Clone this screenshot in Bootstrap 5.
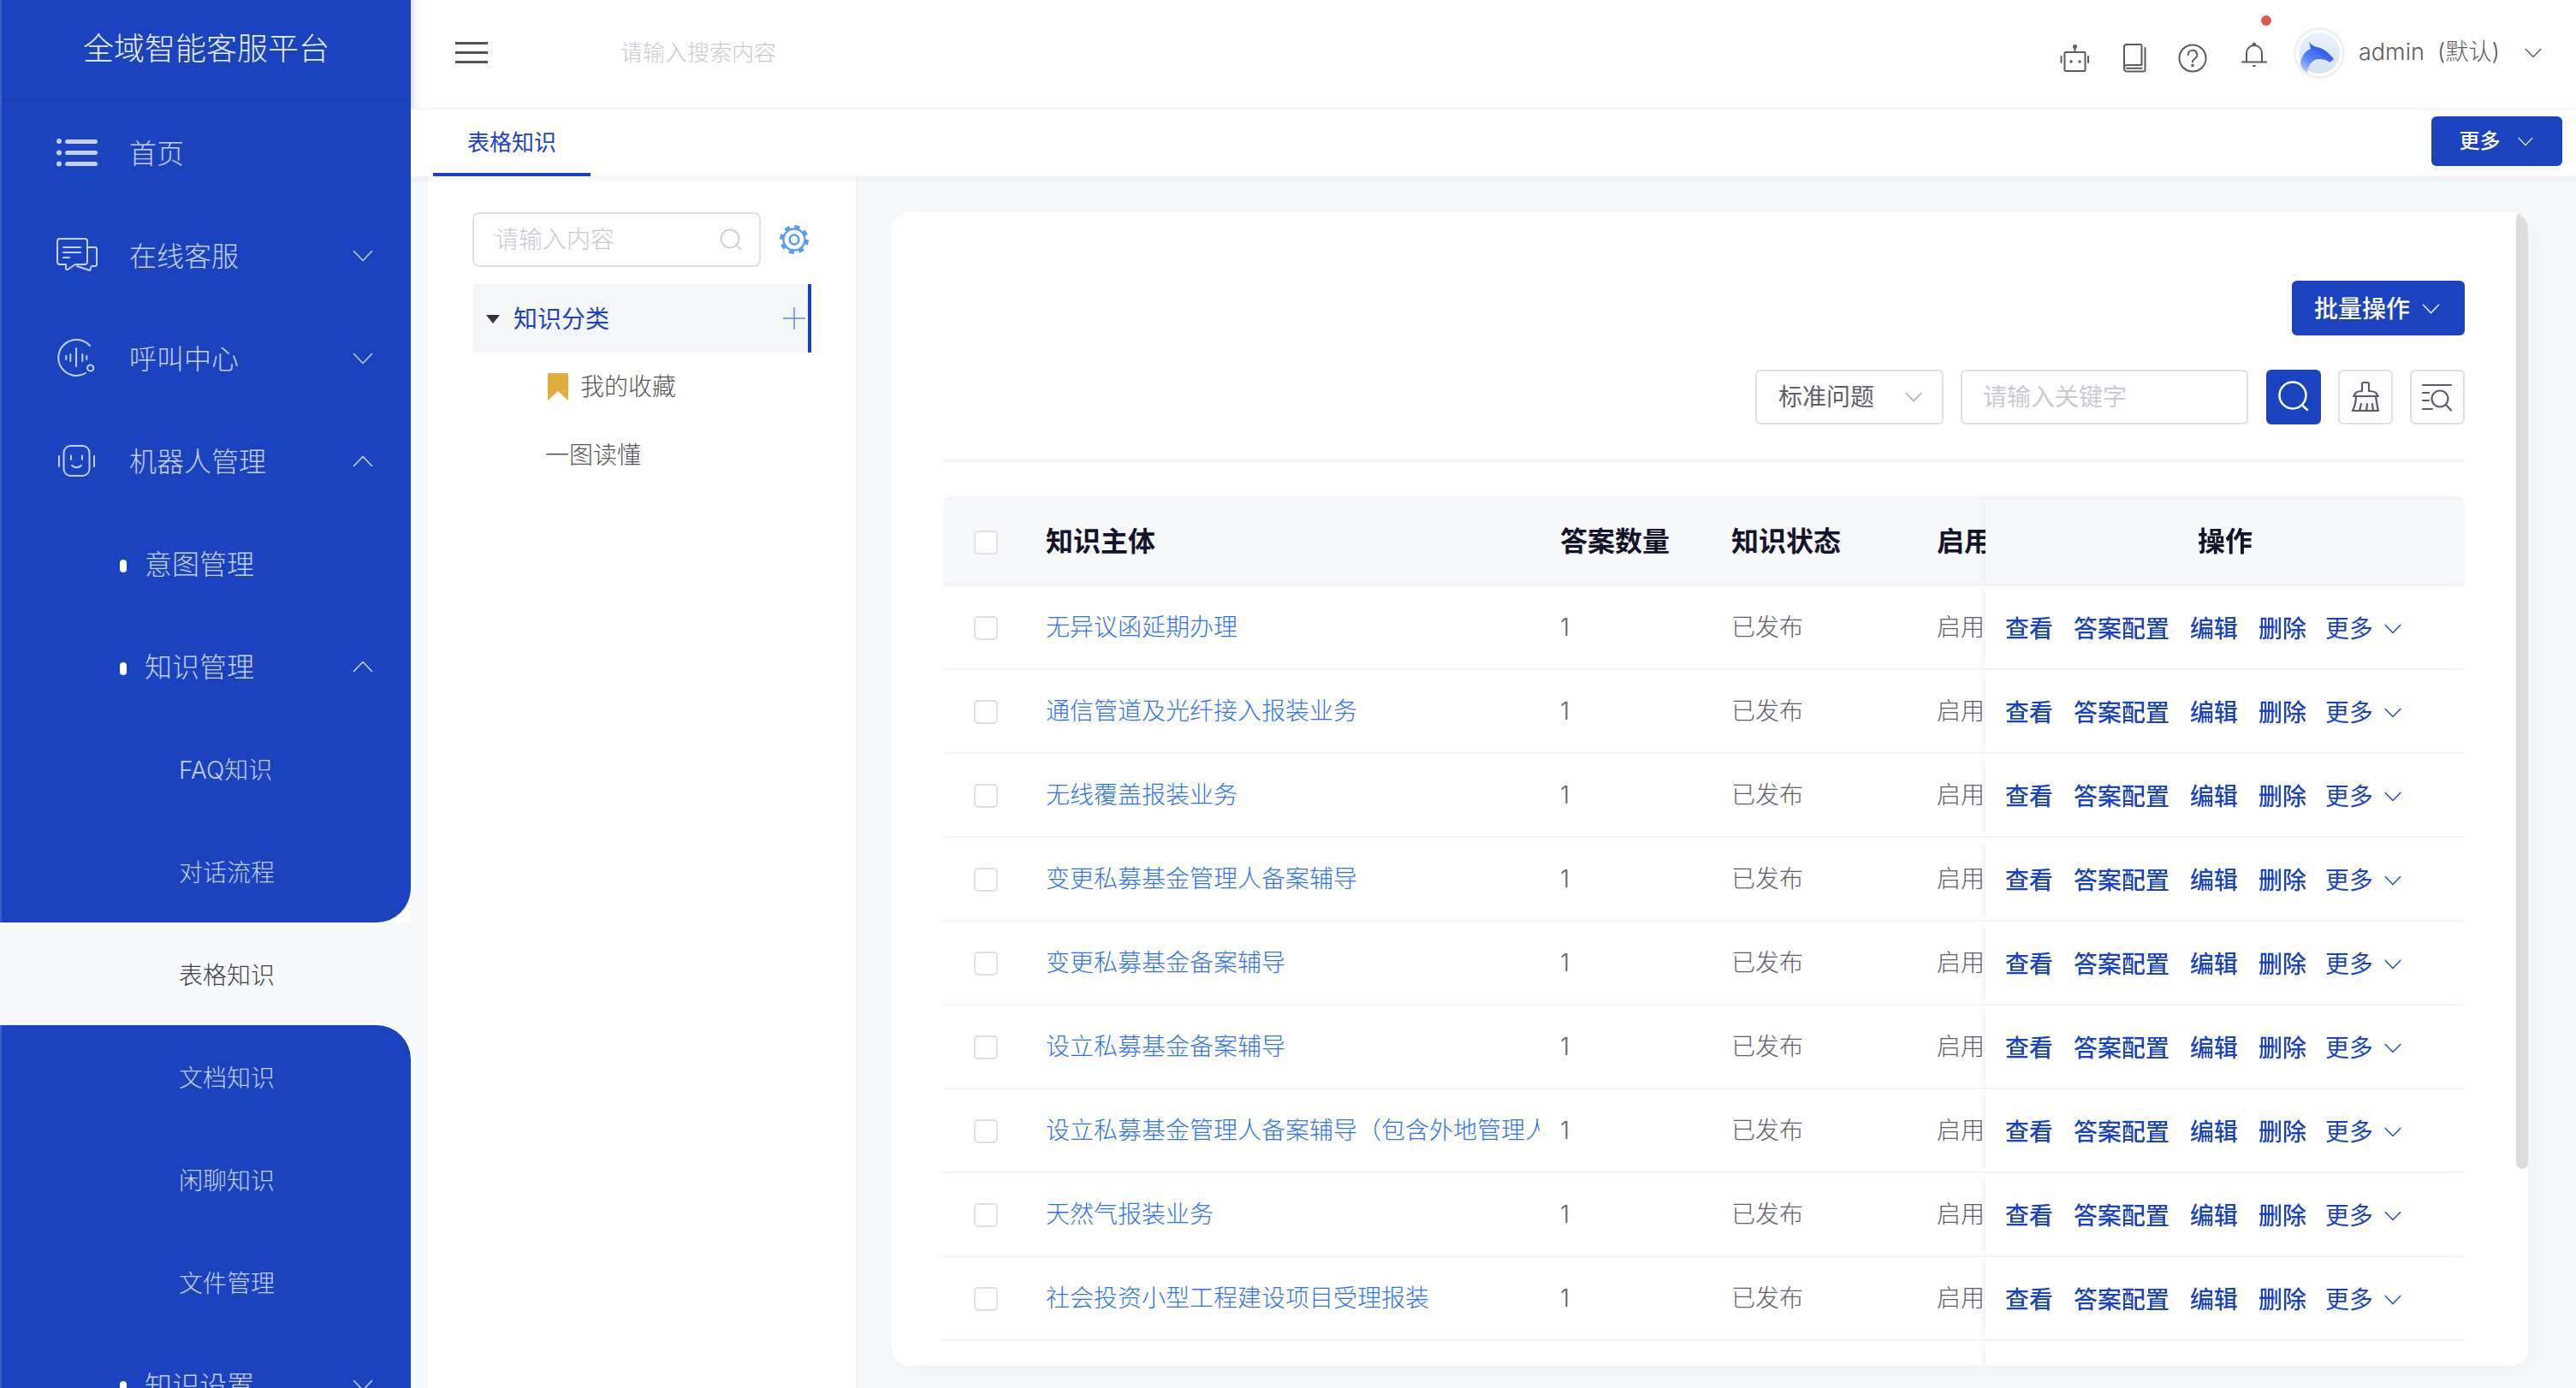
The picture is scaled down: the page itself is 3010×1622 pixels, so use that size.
<!DOCTYPE html>
<html lang="zh-CN">
<head>
<meta charset="utf-8">
<title>全域智能客服平台</title>
<link rel="stylesheet" href="https://cdn.jsdelivr.net/npm/bootstrap@5.3.0/dist/css/bootstrap.min.css">
<style>
:root{--brand:#1c43bf;--txt:#5f606a;--line:#f3f3f8;--pane:#f7f8fa}
html,body{height:100%}
body{font-family:"Inter","Noto Sans CJK SC",sans-serif;font-weight:300;background:var(--pane);overflow:hidden;color:var(--txt);font-size:28px}
svg{display:block;flex:none}
.ico{fill:none;stroke:currentColor;stroke-linecap:round;stroke-linejoin:round}
.side{width:480px;height:1622px;overflow:hidden;background:#f8f9fb;flex:none}
.side-logo{height:118px;flex:none;background:var(--brand);box-shadow:inset 2px 0 0 #3f60c9,inset 0 -2px 0 #1a3eb0;color:#e9eefb;font-size:36px;padding-left:97px;padding-bottom:5px}
.grp-wrap{background:#fff;flex:none}
.grp-a{background:var(--brand);border-bottom-right-radius:40px;box-shadow:inset 2px 0 0 #3f60c9}
.grp-b{background:var(--brand);border-top-right-radius:40px;box-shadow:inset 2px 0 0 #3f60c9;flex-wrap:nowrap;flex:none}
.menu-row{height:120px;flex:none;padding:4px 44px 0 0;color:#c5cff1;font-size:32px}
.menu-row:hover,.menu-row:focus{color:#c5cff1}
.menu-row>svg,.menu-row>.mi,.menu-row>i{position:relative;top:-1px}
.lv1{padding-left:66px}
.lv1 .mi{width:48px;margin-right:37px;display:flex;justify-content:center}
.lv2{padding-left:140px}
.lv2 i{width:8px;height:15px;border-radius:4px;background:#fff;margin-right:21px;margin-top:4px}
.lv3{padding-left:209px;font-size:28px;background:transparent}
.lv3.on,.lv3.on:hover{color:#3e3f49;background:#f8f9fb;flex:none}
.chev{margin-left:auto;color:#c5cff1}
.main{width:2530px;height:1622px}
.topbar{height:128px;flex:none;background:#fff;border-bottom:2px solid #f4f4f7;padding-left:52px;box-shadow:inset 12px 0 10px -10px rgba(40,50,90,.22);color:#5c5c5c}
.burger{width:38px;height:25px;display:flex;flex-direction:column;justify-content:space-between;margin-top:-4px}
.burger i{height:3px;background:#555}
.top-search{margin-left:155px;font-size:26px;color:#c9cad1;margin-top:-4px}
.ti-robot{margin-left:auto;margin-top:12px}
.ti-book{margin-left:39px;margin-top:10px}
.ti-q{margin-left:37px;margin-top:10px}
.ti-bell{margin-left:40px;margin-top:2px;position:relative}
.ti-bell b{position:absolute;left:23px;top:-31px;width:12px;height:12px;border-radius:50%;background:#e05a50}
.ti-ava{margin-left:31px;margin-top:-2px}
.ti-name{margin-left:16px;font-size:27px;color:#5c5c5c;white-space:pre;margin-top:-4px;width:194px}
.ti-chev{margin-right:40px;margin-top:-2px}
.tabbar{height:78px;flex:none;background:#fff;box-shadow:0 3px 6px rgba(40,50,90,.06);position:relative;padding:0 16px 0 26px}
.tab-on{width:184px;height:78px;border-bottom:4px solid var(--brand);color:var(--brand);font-size:26px;font-weight:400;padding-top:3px}
.btn-brand{background:var(--brand);border:0;color:#fff;border-radius:6px;font-weight:500;padding:0}
.btn-brand:hover{background:var(--brand);color:#fff}
.btn-more{width:153px;height:58px;font-size:24px;margin-top:8px;margin-left:auto;gap:20px;padding-right:2px}
.btn-batch{width:202px;height:64px;font-size:28px;gap:14px;padding:2px 0 0 26px;justify-content:flex-start}
.work{height:1416px;padding-left:20px}
.tree{width:502px;background:#fff;border-right:2px solid #f2f2f6;padding:42px 52px 0 52px;flex:none}
.tree-s{width:337px;height:64px;border:2px solid #e0e1e7;border-radius:8px;padding:0 20px 0 24px;color:#c9cad1;font-size:28px}
.tree-sel{width:395px;height:80px;margin:20px 0 0 1px;background:#f5f6f9;border-right:4px solid var(--brand);color:var(--brand);font-size:28px;font-weight:400;padding:2px 2px 0 15px}
.tree-sel u{width:0;height:0;border:8px solid transparent;border-top:10px solid #333;border-bottom:0;margin-right:16px}
.tree-row{height:80px;font-size:28px;color:#555;margin-left:85px}
.tree-row.fav{margin-left:88px}
.pane{padding:42px 0 0 40px}
.sheet{width:1912px;height:1348px;background:#fff;border-radius:20px;box-shadow:8px 8px 20px rgba(60,70,110,.03);padding:80px 74px 0 60px;position:relative;overflow:hidden}
.scrollthumb{position:absolute;right:0;top:0;width:14px;height:1118px;background:#dcdde1;border-radius:7px}
.fbar{margin-top:40px;height:64px}
.fbox{height:64px;border:2px solid #e0e1e7;border-radius:6px;font-size:28px;padding:0}
.fsel{width:220px;padding:0 22px 0 25px;color:#5f606a;margin-right:20px}
.fkey{width:336px;padding:0 24px;color:#c9cad1;margin-right:21px}
.fsq{width:64px;height:64px;padding:0;margin-right:20px;border:2px solid #e0e1e7;border-radius:6px;background:#fff;color:#5a5c66;flex:none}
.fsq.go{background:var(--brand);border-color:var(--brand);color:#fff}
.fsq:last-child{margin-right:0}
.rule{height:4px;background:#f5f5f9;margin:40px 0}
.kb{table-layout:fixed;width:1778px;margin:0;border-collapse:separate;border-spacing:0}
.table.kb>:not(caption)>*>*{padding:0;height:98px;border:0;border-bottom:2px solid var(--line);background:#fff;box-shadow:none;color:var(--txt);font-weight:300;vertical-align:middle;font-size:28px}
.table.kb>thead>tr>th{height:105px;background:var(--pane);border-top:4px solid var(--line);border-bottom:4px solid var(--line);color:#14152c;font-weight:700;font-size:32px;overflow:hidden;white-space:nowrap}
.kb thead th:first-child{border-top-left-radius:8px}
.kb thead th:last-child{border-top-right-radius:8px}
.cb{width:28px;height:28px;border:2px solid #dfe0e6;border-radius:5px;background:#fff;margin:2px 0 0 36px}
.name-clip{width:577px;overflow:hidden;white-space:nowrap}
.name-clip a{color:#2f72f0;text-decoration:none}
.table.kb>*>tr>.opc{position:sticky;right:0;box-shadow:-8px 0 8px -6px rgba(40,50,90,.08)}
.table.kb>thead>tr>th.opc{text-align:center;padding-right:0}
.acts{padding:3px 0 0 23px;color:var(--brand);font-weight:500}
.acts a{color:var(--brand);text-decoration:none;margin-right:24px;white-space:nowrap}
.acts a.m{font-weight:400;margin-right:13px;margin-left:-2px}
</style>
</head>
<body>
<svg width="0" height="0" style="position:absolute">
  <symbol id="cd" viewBox="0 0 24 14"><path d="M1.5 1.5 12 12.5 22.5 1.5" fill="none" stroke="currentColor" stroke-width="1.6" stroke-linecap="round" stroke-linejoin="round"/></symbol>
  <symbol id="cu" viewBox="0 0 24 14"><path d="M1.5 12.5 12 1.5 22.5 12.5" fill="none" stroke="currentColor" stroke-width="1.6" stroke-linecap="round" stroke-linejoin="round"/></symbol>
</svg>

<div class="d-flex">
  <aside class="side d-flex flex-column">
    <div class="side-logo d-flex align-items-center">全域智能客服平台</div>
    <div class="grp-wrap">
      <nav class="nav flex-column grp-a">
        <a class="nav-link menu-row lv1 d-flex align-items-center" href="#"><span class="mi"><svg width="48" height="34" viewBox="0 0 48 34"><g fill="currentColor"><circle cx="3" cy="3" r="3"/><circle cx="3" cy="16.5" r="3"/><circle cx="3" cy="29.5" r="3"/><rect x="10" y="1" width="38" height="5" rx="2.5"/><rect x="10" y="14" width="38" height="5" rx="2.5"/><rect x="10" y="27" width="38" height="5" rx="2.5"/></g></svg></span>首页</a>
        <a class="nav-link menu-row lv1 d-flex align-items-center" href="#"><span class="mi"><svg class="ico" width="48" height="42" viewBox="0 0 48 42" stroke-width="2"><path d="M4 1H33a3 3 0 0 1 3 3V28a3 3 0 0 1-3 3H22L13 37a1.5 1.5 0 0 1-2-1L11 31H4a3 3 0 0 1-3-3V4a3 3 0 0 1 3-3Z"/><path d="M36 11H45a2 2 0 0 1 2 2V31a2 2 0 0 1-2 2H41L39 38 24 33"/><path d="M8 11H28M8 17H28M8 23H15"/></svg></span>在线客服<svg class="chev" width="24" height="14"><use href="#cd"/></svg></a>
        <a class="nav-link menu-row lv1 d-flex align-items-center" href="#"><span class="mi"><svg class="ico" width="46" height="46" viewBox="0 0 46 46" stroke-width="2"><path d="M38 8A21 21 0 1 0 33 40"/><circle cx="38.7" cy="34" r="3.6"/><path d="M22 11V32M15.300 18V26M29.300 18V26M10.300 20V24M34.300 20V24"/></svg></span>呼叫中心<svg class="chev" width="24" height="14"><use href="#cd"/></svg></a>
        <a class="nav-link menu-row lv1 d-flex align-items-center" href="#"><span class="mi"><svg class="ico" width="46" height="38" viewBox="0 0 46 38" stroke-width="2"><rect x="7.500" y="1" width="30" height="35" rx="8"/><path d="M2 13V25M43 13V25M16 12.500V17M29 12.500V17M17 24Q22.500 28.500 28 24"/></svg></span>机器人管理<svg class="chev" width="24" height="14"><use href="#cu"/></svg></a>
        <a class="nav-link menu-row lv2 d-flex align-items-center" href="#"><i></i>意图管理</a>
        <a class="nav-link menu-row lv2 d-flex align-items-center" href="#"><i></i>知识管理<svg class="chev" width="24" height="14"><use href="#cu"/></svg></a>
        <a class="nav-link menu-row lv3 d-flex align-items-center" href="#">FAQ知识</a>
        <a class="nav-link menu-row lv3 d-flex align-items-center" href="#">对话流程</a>
      </nav>
    </div>
    <a class="nav-link menu-row lv3 on d-flex align-items-center" href="#">表格知识</a>
    <nav class="nav flex-column grp-b">
      <a class="nav-link menu-row lv3 d-flex align-items-center" href="#">文档知识</a>
      <a class="nav-link menu-row lv3 d-flex align-items-center" href="#">闲聊知识</a>
      <a class="nav-link menu-row lv3 d-flex align-items-center" href="#">文件管理</a>
      <a class="nav-link menu-row lv2 d-flex align-items-center" href="#"><i></i>知识设置<svg class="chev" width="24" height="14"><use href="#cd"/></svg></a>
    </nav>
  </aside>

  <main class="main d-flex flex-column">
    <header class="topbar d-flex align-items-center">
      <span class="burger"><i></i><i></i><i></i></span>
      <span class="top-search">请输入搜索内容</span>
      <svg class="ico ti-robot" width="34" height="34" viewBox="0 0 34 34" stroke-width="2"><rect x="5.500" y="9" width="24" height="22" rx="1"/><path d="M17.500 3V9M1.500 14V21M33 14V21"/><circle cx="17.500" cy="2.500" r="1.500" fill="currentColor"/><circle cx="13" cy="20" r="1.700" fill="currentColor" stroke="none"/><circle cx="23" cy="20" r="1.700" fill="currentColor" stroke="none"/></svg>
      <svg class="ico ti-book" width="28" height="34" viewBox="0 0 28 34" stroke-width="2"><path d="M2 28V4A3 3 0 0 1 5 1H21A1.500 1.500 0 0 1 22.500 2.500V25H5A3.500 3.500 0 0 0 2 28.500 3.500 3.500 0 0 0 5 32.500H25A1.500 1.500 0 0 0 26.500 31V5"/><path d="M5 28.700H22.500"/></svg>
      <svg class="ico ti-q" width="34" height="34" viewBox="0 0 34 34" stroke-width="2"><circle cx="17" cy="17" r="15.500"/><path d="M11.800 13a5.200 5.200 0 1 1 7.800 4.500C17.800 18.500 17 19.500 17 21.500"/><circle cx="17" cy="25.500" r=".8" fill="currentColor"/></svg>
      <span class="ti-bell"><svg class="ico" width="30" height="30" viewBox="0 0 30 30" stroke-width="2"><path d="M6 23V13A9 9 0 0 1 24 13V23"/><path d="M1 23.500H29"/><circle cx="15" cy="3" r="1.200" fill="currentColor"/><path d="M14 28H16"/></svg><b></b></span>
      <svg class="ti-ava" width="60" height="60" viewBox="0 0 60 60"><defs><linearGradient id="ag" x1="0" y1="0" x2="0" y2="1"><stop offset="0" stop-color="#e8f2fd"/><stop offset="1" stop-color="#d5e3f4"/></linearGradient><linearGradient id="ah" x1=".7" y1=".2" x2=".1" y2="1"><stop offset="0" stop-color="#2b58f4"/><stop offset=".6" stop-color="#5f8af6"/><stop offset="1" stop-color="#b6cff8"/></linearGradient></defs><circle cx="30" cy="30" r="28.500" fill="#fff" stroke="#f0f0f3" stroke-width="3"/><circle cx="30" cy="30" r="24" fill="url(#ag)"/><path d="M8 41C10 33 14 27 20 25L18 17C22 22 27 23 31 24 37 26 42 31 47 37L42 41C39 38 35 37 31 37 24 36 17 42 16 53 11 50 8 46 8 41Z" fill="url(#ah)"/></svg>
      <span class="ti-name">admin  (默认)</span>
      <svg class="ti-chev" width="20" height="12"><use href="#cd"/></svg>
    </header>
    <div class="tabbar d-flex">
      <div class="tab-on d-flex align-items-center justify-content-center">表格知识</div>
      <button class="btn btn-brand btn-more d-flex align-items-center justify-content-center" type="button">更多<svg width="18" height="11"><use href="#cd"/></svg></button>
    </div>
    <div class="work d-flex">
      <section class="tree">
        <div class="tree-s d-flex align-items-center justify-content-between position-relative">请输入内容
          <svg class="ico" width="26" height="26" viewBox="0 0 26 26" stroke-width="1.600" color="#c9cad1"><circle cx="12" cy="12" r="10.500"/><path d="M20 20 24.500 24.500"/></svg>
          <svg class="ico position-absolute" style="left:356px;top:12px" width="36" height="36" viewBox="0 0 36 36" stroke-width="2.400" color="#5b9bf6"><circle cx="18" cy="18" r="12.500"/><circle cx="18" cy="18" r="5.500"/><circle cx="18" cy="18" r="15" stroke-width="4" stroke-dasharray="6 5.780" stroke-linecap="butt"/></svg>
        </div>
        <div class="tree-sel d-flex align-items-center"><u></u>知识分类<svg class="ms-auto" width="26" height="26" viewBox="0 0 26 26" style="margin:-2px 1px 0 0"><path d="M13 0V26M0 13H26" stroke="#5b8ee8" stroke-width="1.500"/></svg></div>
        <div class="tree-row fav d-flex align-items-center"><svg width="24" height="32" viewBox="0 0 24 32" style="margin-right:14px"><path d="M0 0H24V32L12 21 0 32Z" fill="#dfae3c"/></svg>我的收藏</div>
        <div class="tree-row d-flex align-items-center">一图读懂</div>
      </section>
      <section class="pane">
        <div class="sheet">
          <span class="scrollthumb"></span>
          <div class="d-flex justify-content-end"><button class="btn btn-brand btn-batch d-flex align-items-center" type="button">批量操作<svg width="21" height="12"><use href="#cd"/></svg></button></div>
          <div class="fbar d-flex justify-content-end">
            <div class="form-control fbox fsel d-flex align-items-center justify-content-between">标准问题<svg width="22" height="12" color="#a9aab2"><use href="#cd"/></svg></div>
            <div class="form-control fbox fkey d-flex align-items-center">请输入关键字</div>
            <button class="btn fsq go d-flex" type="button"><svg class="ico" width="60" height="60" viewBox="0 0 60 60" stroke-width="2.500"><circle cx="29" cy="28" r="15.500"/><path d="M40 39.500 46 45"/></svg></button>
            <button class="btn fsq d-flex" type="button"><svg class="ico" width="60" height="60" viewBox="2 2 60 60" stroke-width="2.200"><path d="M19 31C19 27 23 25 28 25V17A2 2 0 0 1 30 15H34A2 2 0 0 1 36 17V25C42 25 46 27 46 31M18 31H47M21 31C21 38 19 44 17 48H47C46 44 45 38 44 31M25 48 27 40M33 48 34 40M41 48 40 40"/></svg></button>
            <button class="btn fsq d-flex" type="button"><svg class="ico" width="60" height="60" viewBox="2 2 60 60" stroke-width="2.200"><path d="M15 18H48M15 27H22M15 36H22M15 46H26"/><circle cx="35" cy="34" r="9.500"/><path d="M42 41 48 47.500"/></svg></button>
          </div>
          <div class="rule"></div>
          <table class="table kb">
            <colgroup><col style="width:120px"><col style="width:601px"><col style="width:200px"><col style="width:240px"><col style="width:57px"><col style="width:560px"></colgroup>
            <thead><tr><th><div class="cb"></div></th><th>知识主体</th><th>答案数量</th><th>知识状态</th><th>启用</th><th class="opc">操作</th></tr></thead>
            <tbody id="rows">
              <tr><td><div class="cb"></div></td><td><div class="name-clip"><a href="#">无异议函延期办理</a></div></td><td>1</td><td>已发布</td><td>启用</td><td class="opc"><div class="acts d-flex align-items-center"><a href="#">查看</a><a href="#">答案配置</a><a href="#">编辑</a><a href="#">删除</a><a class="m" href="#">更多</a><svg width="20" height="12"><use href="#cd"/></svg></div></td></tr>
              <tr><td><div class="cb"></div></td><td><div class="name-clip"><a href="#">通信管道及光纤接入报装业务</a></div></td><td>1</td><td>已发布</td><td>启用</td><td class="opc"><div class="acts d-flex align-items-center"><a href="#">查看</a><a href="#">答案配置</a><a href="#">编辑</a><a href="#">删除</a><a class="m" href="#">更多</a><svg width="20" height="12"><use href="#cd"/></svg></div></td></tr>
              <tr><td><div class="cb"></div></td><td><div class="name-clip"><a href="#">无线覆盖报装业务</a></div></td><td>1</td><td>已发布</td><td>启用</td><td class="opc"><div class="acts d-flex align-items-center"><a href="#">查看</a><a href="#">答案配置</a><a href="#">编辑</a><a href="#">删除</a><a class="m" href="#">更多</a><svg width="20" height="12"><use href="#cd"/></svg></div></td></tr>
              <tr><td><div class="cb"></div></td><td><div class="name-clip"><a href="#">变更私募基金管理人备案辅导</a></div></td><td>1</td><td>已发布</td><td>启用</td><td class="opc"><div class="acts d-flex align-items-center"><a href="#">查看</a><a href="#">答案配置</a><a href="#">编辑</a><a href="#">删除</a><a class="m" href="#">更多</a><svg width="20" height="12"><use href="#cd"/></svg></div></td></tr>
              <tr><td><div class="cb"></div></td><td><div class="name-clip"><a href="#">变更私募基金备案辅导</a></div></td><td>1</td><td>已发布</td><td>启用</td><td class="opc"><div class="acts d-flex align-items-center"><a href="#">查看</a><a href="#">答案配置</a><a href="#">编辑</a><a href="#">删除</a><a class="m" href="#">更多</a><svg width="20" height="12"><use href="#cd"/></svg></div></td></tr>
              <tr><td><div class="cb"></div></td><td><div class="name-clip"><a href="#">设立私募基金备案辅导</a></div></td><td>1</td><td>已发布</td><td>启用</td><td class="opc"><div class="acts d-flex align-items-center"><a href="#">查看</a><a href="#">答案配置</a><a href="#">编辑</a><a href="#">删除</a><a class="m" href="#">更多</a><svg width="20" height="12"><use href="#cd"/></svg></div></td></tr>
              <tr><td><div class="cb"></div></td><td><div class="name-clip"><a href="#">设立私募基金管理人备案辅导（包含外地管理人）</a></div></td><td>1</td><td>已发布</td><td>启用</td><td class="opc"><div class="acts d-flex align-items-center"><a href="#">查看</a><a href="#">答案配置</a><a href="#">编辑</a><a href="#">删除</a><a class="m" href="#">更多</a><svg width="20" height="12"><use href="#cd"/></svg></div></td></tr>
              <tr><td><div class="cb"></div></td><td><div class="name-clip"><a href="#">天然气报装业务</a></div></td><td>1</td><td>已发布</td><td>启用</td><td class="opc"><div class="acts d-flex align-items-center"><a href="#">查看</a><a href="#">答案配置</a><a href="#">编辑</a><a href="#">删除</a><a class="m" href="#">更多</a><svg width="20" height="12"><use href="#cd"/></svg></div></td></tr>
              <tr><td><div class="cb"></div></td><td><div class="name-clip"><a href="#">社会投资小型工程建设项目受理报装</a></div></td><td>1</td><td>已发布</td><td>启用</td><td class="opc"><div class="acts d-flex align-items-center"><a href="#">查看</a><a href="#">答案配置</a><a href="#">编辑</a><a href="#">删除</a><a class="m" href="#">更多</a><svg width="20" height="12"><use href="#cd"/></svg></div></td></tr>
              <tr><td></td><td></td><td></td><td></td><td></td><td class="opc"></td></tr>
            </tbody>
          </table>
        </div>
      </section>
    </div>
  </main>
</div>
<script src="https://cdn.jsdelivr.net/npm/bootstrap@5.3.0/dist/js/bootstrap.bundle.min.js"></script>
</body>
</html>
